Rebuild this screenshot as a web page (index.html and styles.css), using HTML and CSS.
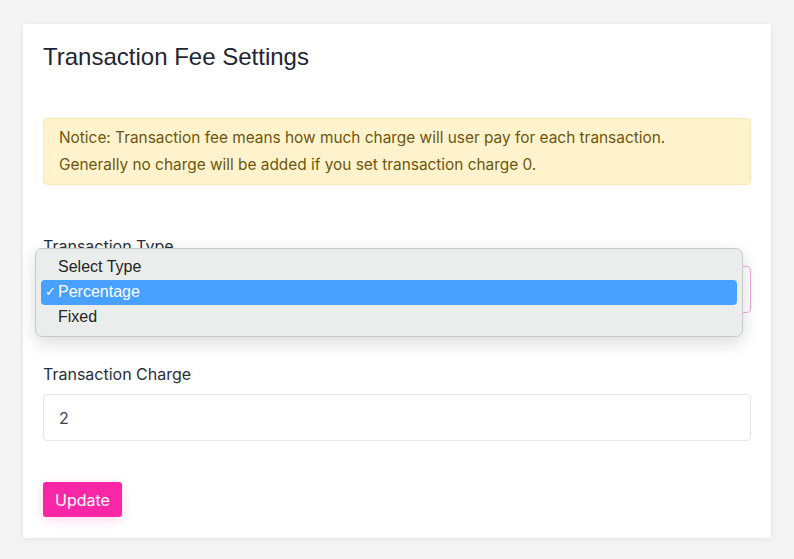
FILE: index.html
```html
<!DOCTYPE html>
<html lang="en">
<head>
<meta charset="UTF-8" />
<meta name="viewport" content="width=device-width, initial-scale=1" />
<title>Transaction Fee Settings</title>
<link rel="stylesheet" href="styles.css">
</head>
<body>

<div class="card">
  <h2 class="card-title">Transaction Fee Settings</h2>

  <div class="notice">
    Notice: Transaction fee means how much charge will user pay for each transaction.<br>
    Generally no charge will be added if you set transaction charge 0.
  </div>

  <div class="form-group">
    <label class="form-label">Transaction Type</label>
    <div class="select-wrap">
      <div class="form-select"></div>
      <!-- open native dropdown -->
      <ul class="select-menu">
        <li>Select Type</li>
        <li class="selected"><span class="check">&#10003;</span>Percentage</li>
        <li>Fixed</li>
      </ul>
    </div>
  </div>

  <div class="form-group">
    <label class="form-label">Transaction Charge</label>
    <input type="text" class="form-input" value="2" />
  </div>

  <button class="btn-update">Update</button>
</div>

</body>
</html>
```

FILE: styles.css
```css
body {
  margin: 0;
  padding: 24px 23px;
  background: #f4f4f4;
  font-family: Inter, "Noto Sans", sans-serif;
}
.card {
  width: 748px;
  box-sizing: border-box;
  background: #fff;
  padding: 18px 20px 21px;
  box-shadow: 0 1px 6px rgba(0, 0, 0, 0.08);
}
.card-title {
  margin: 0 0 47px;
  font-family: "Liberation Sans", Arial, sans-serif;
  font-weight: normal;
  font-size: 24px;
  line-height: 29px;
  color: #1e2535;
}
.notice {
  background: #fef3cd;
  border: 1px solid #fce9b1;
  border-radius: 4px;
  padding: 5px 15px 6px;
  color: #6e560d;
  font-size: 15.4px;
  line-height: 27px;
  margin-bottom: 49px;
}
.form-group {
  margin-bottom: 49px;
}
.form-group + .form-group {
  margin-bottom: 41px;
}
.form-label {
  display: block;
  font-size: 16px;
  line-height: 24px;
  color: #2a2f3a;
  margin-bottom: 8px;
}
.select-wrap {
  position: relative;
}
.form-select {
  height: 47px;
  box-sizing: border-box;
  border: 1px solid #f7a8d8;
  border-radius: 4px;
}
.select-menu {
  position: absolute;
  left: -8px;
  top: -18px;
  width: 708px;
  box-sizing: border-box;
  margin: 0;
  padding: 6px 5px 6px;
  list-style: none;
  background: #ebecec;
  border: 1px solid #c9c9c9;
  border-radius: 7px;
  box-shadow: 0 6px 18px rgba(0, 0, 0, 0.14);
  font-family: "Liberation Sans", Arial, sans-serif;
  font-size: 16px;
  color: #242424;
}
.select-menu li {
  height: 25px;
  line-height: 24px;
  padding-left: 17px;
  border-radius: 4px;
  position: relative;
}
.select-menu li.selected {
  background: #48a1ff;
  color: #fff;
}
.select-menu .check {
  position: absolute;
  left: 4px;
  font-size: 13px;
}
.form-input {
  display: block;
  width: 100%;
  height: 47px;
  box-sizing: border-box;
  border: 1px solid #e6e6e6;
  border-radius: 4px;
  padding: 0 15px;
  font-family: Inter, "Noto Sans", sans-serif;
  font-size: 16px;
  color: #3b4150;
  outline: none;
}
.btn-update {
  display: block;
  height: 35px;
  padding: 0 12px;
  border: none;
  border-radius: 3px;
  background: #f926a5;
  color: #fff;
  font-family: Inter, "Noto Sans", sans-serif;
  font-size: 16px;
  box-shadow: 0 3px 12px rgba(249, 38, 165, 0.18);
}
```
